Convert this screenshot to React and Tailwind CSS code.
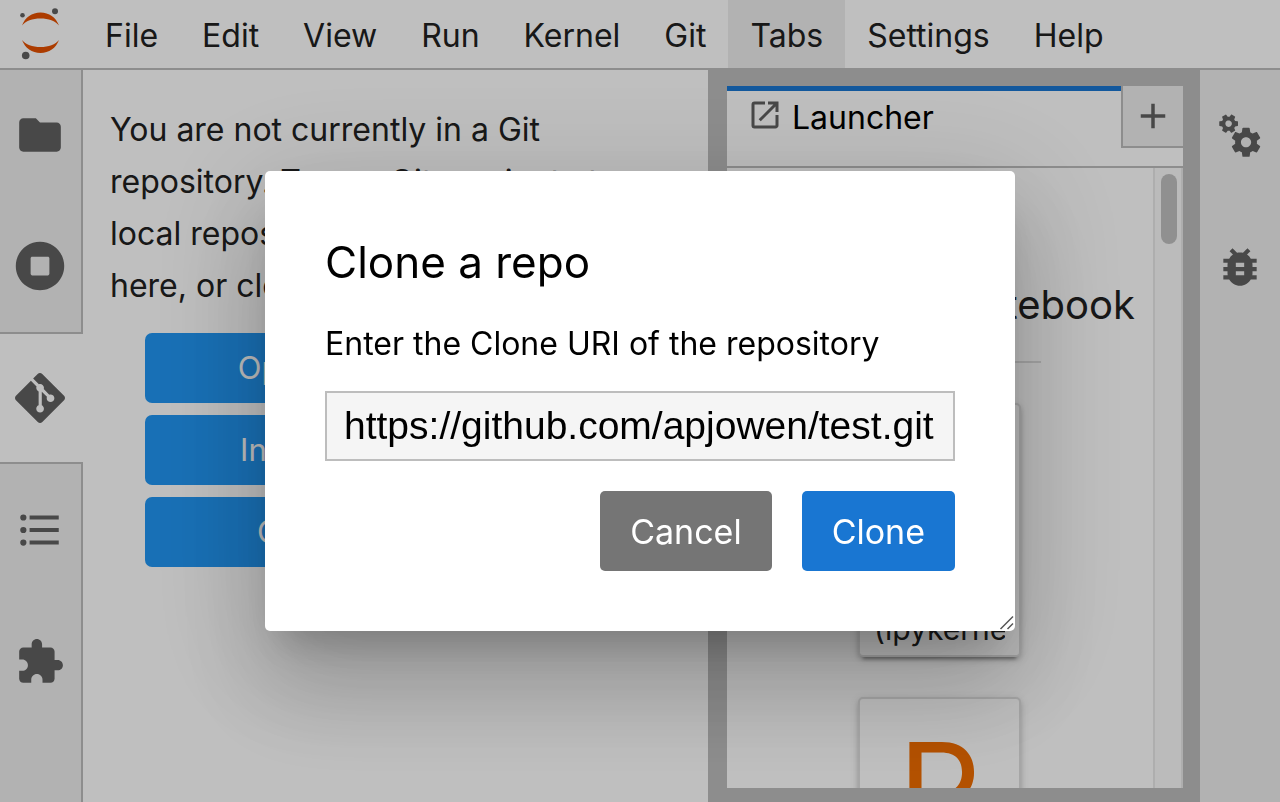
import React from "react";

const PATHS = {
  folder:
    "M10 4H4c-1.1 0-1.99.9-1.99 2L2 18c0 1.1.9 2 2 2h16c1.1 0 2-.9 2-2V8c0-1.1-.9-2-2-2h-8l-2-2z",
  git: "M23.546 10.93L13.067.452c-.604-.603-1.582-.603-2.188 0L8.708 2.627l2.76 2.76c.645-.215 1.379-.07 1.889.441.516.515.658 1.258.438 1.9l2.658 2.66c.645-.223 1.387-.078 1.9.435.721.72.721 1.884 0 2.604-.719.719-1.881.719-2.6 0-.539-.541-.674-1.337-.404-1.996L12.86 8.955v6.525c.176.086.342.203.488.348.713.721.713 1.883 0 2.6-.719.721-1.889.721-2.609 0-.719-.719-.719-1.879 0-2.598.182-.18.387-.316.605-.406V8.835c-.217-.091-.424-.222-.6-.401-.545-.545-.676-1.342-.396-2.009L7.636 3.7.45 10.881c-.6.605-.6 1.584 0 2.189l10.48 10.477c.604.604 1.582.604 2.186 0l10.43-10.43c.605-.603.605-1.582 0-2.187",
  toc: "M7 5H21V7H7V5M7 13V11H21V13H7M4 4.5A1.5 1.5 0 0 1 5.5 6A1.5 1.5 0 0 1 4 7.5A1.5 1.5 0 0 1 2.5 6A1.5 1.5 0 0 1 4 4.5M4 10.5A1.5 1.5 0 0 1 5.5 12A1.5 1.5 0 0 1 4 13.5A1.5 1.5 0 0 1 2.5 12A1.5 1.5 0 0 1 4 10.5M7 19V17H21V19H7M4 16.5A1.5 1.5 0 0 1 5.5 18A1.5 1.5 0 0 1 4 19.5A1.5 1.5 0 0 1 2.5 18A1.5 1.5 0 0 1 4 16.5Z",
  extension:
    "M20.5 11H19V7c0-1.1-.9-2-2-2h-4V3.5C13 2.12 11.88 1 10.5 1S8 2.12 8 3.5V5H4c-1.1 0-1.99.9-1.99 2v3.8H3.5c1.49 0 2.7 1.21 2.7 2.7s-1.21 2.7-2.7 2.7H2V20c0 1.1.9 2 2 2h3.8v-1.5c0-1.49 1.21-2.7 2.7-2.7 1.49 0 2.7 1.21 2.7 2.7V22H17c1.1 0 2-.9 2-2v-4h1.5c1.38 0 2.5-1.12 2.5-2.5S21.88 11 20.5 11z",
  launcher:
    "M19 19H5V5h7V3H5a2 2 0 0 0-2 2v14a2 2 0 0 0 2 2h14c1.1 0 2-.9 2-2v-7h-2v7zM14 3v2h3.59l-9.83 9.83 1.41 1.41L19 6.41V10h2V3h-7z",
  add: "M19 13h-6v6h-2v-6H5v-2h6V5h2v6h6v2z",
  bug: "M20 8h-2.81c-.45-.78-1.07-1.45-1.82-1.96L17 4.41 15.59 3l-2.17 2.17C12.96 5.06 12.49 5 12 5s-.96.06-1.41.17L8.41 3 7 4.41l1.62 1.63C7.88 6.55 7.26 7.22 6.81 8H4v2h2.09c-.05.33-.09.66-.09 1v1H4v2h2v1c0 .34.04.67.09 1H4v2h2.81c1.04 1.79 2.97 3 5.19 3s4.15-1.21 5.19-3H20v-2h-2.09c.05-.33.09-.66.09-1v-1h2v-2h-2v-1c0-.34-.04-.67-.09-1H20V8zm-6 8h-4v-2h4v2zm0-4h-4v-2h4v2z",
  gears:
    "M14.9 17.45C16.25 17.45 17.35 16.35 17.35 15C17.35 13.65 16.25 12.55 14.9 12.55C13.54 12.55 12.45 13.65 12.45 15C12.45 16.35 13.54 17.45 14.9 17.45ZM20.1 15.68L21.58 16.84C21.71 16.95 21.75 17.13 21.66 17.29L20.26 19.71C20.17 19.86 20 19.92 19.83 19.86L18.09 19.16C17.73 19.44 17.33 19.67 16.91 19.85L16.64 21.7C16.62 21.87 16.47 22 16.3 22H13.5C13.32 22 13.18 21.87 13.15 21.7L12.89 19.85C12.46 19.67 12.07 19.44 11.71 19.16L9.96 19.86C9.81 19.92 9.62 19.86 9.54 19.71L8.14 17.29C8.05 17.13 8.09 16.95 8.22 16.84L9.7 15.68L9.65 15L9.7 14.31L8.22 13.16C8.09 13.05 8.05 12.86 8.14 12.71L9.54 10.29C9.62 10.13 9.81 10.07 9.96 10.13L11.71 10.84C12.07 10.56 12.46 10.32 12.89 10.15L13.15 8.29C13.18 8.13 13.32 8 13.5 8H16.3C16.47 8 16.62 8.13 16.64 8.29L16.91 10.15C17.33 10.32 17.73 10.56 18.09 10.84L19.83 10.13C20 10.07 20.17 10.13 20.26 10.29L21.66 12.71C21.75 12.86 21.71 13.05 21.58 13.16L20.1 14.31L20.15 15L20.1 15.68ZM7.33 7.44C8.08 7.01 8.34 6.05 7.9 5.3C7.47 4.55 6.51 4.28 5.75 4.72C5.39 4.93 5.13 5.27 5.02 5.68C4.91 6.08 4.97 6.51 5.18 6.87C5.61 7.63 6.58 7.88 7.33 7.44ZM9.66 4.8L10.87 4.95C10.96 4.98 11.04 5.07 11.04 5.19L11.04 6.99C11.05 7.1 10.96 7.2 10.86 7.21L9.66 7.38L9.24 8.13L9.67 9.26C9.71 9.36 9.67 9.48 9.57 9.53L8.02 10.43C7.91 10.49 7.79 10.47 7.72 10.38L6.99 9.43L6.11 9.43L5.35 10.39C5.29 10.47 5.17 10.49 5.07 10.45L3.51 9.53C3.41 9.48 3.38 9.36 3.41 9.26L3.86 8.14L3.62 7.77L3.42 7.38L2.23 7.21C2.13 7.19 2.04 7.1 2.04 6.99L2.04 5.19C2.04 5.07 2.12 4.99 2.23 4.96L3.42 4.8L3.84 4.04L3.41 2.92C3.37 2.81 3.41 2.69 3.51 2.64L5.06 1.74C5.16 1.68 5.28 1.71 5.36 1.79L6.09 2.74L6.97 2.74L7.73 1.79C7.79 1.71 7.91 1.69 8.01 1.73L9.57 2.64C9.67 2.7 9.71 2.82 9.67 2.92L9.22 4.03L9.46 4.4L9.66 4.8Z",
};

const RUNNING =
  "M256 8C119 8 8 119 8 256s111 248 248 248 248-111 248-248S393 8 256 8zm96 328c0 8.8-7.2 16-16 16H176c-8.8 0-16-7.2-16-16V176c0-8.8 7.2-16 16-16h160c8.8 0 16 7.2 16 16v160z";

function Icon({ d, viewBox = "0 0 24 24", className = "size-[50px]" }) {
  return (
    <svg viewBox={viewBox} className={className + " shrink-0 fill-[#616161]"} aria-hidden="true">
      <path d={d} fillRule="evenodd" />
    </svg>
  );
}

function JupyterLogo() {
  return (
    <svg viewBox="0 0 83 68" className="h-[68px] w-[83px] shrink-0" role="img" aria-label="Jupyter">
      <g fill="#e65100">
        <path d="M22 25.500C25 17.500 32 12.500 40.500 12.500S56 17.500 59 25.500C55.500 21 48.500 18.500 40.500 18.500S25.500 21 22 25.500Z" />
        <path d="M22 40C25 48 32 53 40.500 53S56 48 59 40C55.500 44.500 48.500 47 40.500 47S25.500 44.500 22 40Z" />
      </g>
      <g fill="#616161">
        <circle cx="22.500" cy="15.300" r="2.300" />
        <circle cx="55" cy="11.300" r="3" />
        <circle cx="25.700" cy="55.500" r="3.800" />
      </g>
    </svg>
  );
}

const MENUS = ["File", "Edit", "View", "Run", "Kernel", "Git", "Tabs", "Settings", "Help"];

function MenuBar() {
  return (
    <header className="flex h-[70px] shrink-0 items-stretch border-b-2 border-[#bdbdbd] bg-white">
      <JupyterLogo />
      <nav className="flex items-stretch" aria-label="Main menu">
        {MENUS.map((name) => (
          <button
            key={name}
            type="button"
            className={
              "px-[22px] pt-[3px] text-[32px] " + (name === "Tabs" ? "bg-[#eeeeee]" : "bg-transparent")
            }
          >
            {name}
          </button>
        ))}
      </nav>
    </header>
  );
}

function SideTab({ label, first, active, children }) {
  return (
    <button
      type="button"
      aria-label={label}
      className={
        "flex w-full shrink-0 items-center pl-[15px] " +
        (first ? "h-[130px] " : "h-[132px] ") +
        (active ? "border-y-2 border-[#bdbdbd] bg-white" : "border-r-2 border-[#bdbdbd] bg-[#eeeeee]")
      }
    >
      {children}
    </button>
  );
}

function LeftBar() {
  return (
    <nav className="flex w-[83px] shrink-0 flex-col" aria-label="Left sidebar">
      <SideTab label="File Browser" first>
        <Icon d={PATHS.folder} />
      </SideTab>
      <SideTab label="Running Terminals and Kernels">
        <Icon d={RUNNING} viewBox="0 0 512 512" />
      </SideTab>
      <SideTab label="Git" active>
        <Icon d={PATHS.git} />
      </SideTab>
      <SideTab label="Table of Contents">
        <Icon d={PATHS.toc} />
      </SideTab>
      <SideTab label="Extension Manager">
        <Icon d={PATHS.extension} />
      </SideTab>
      <div className="flex-1 border-r-2 border-[#bdbdbd] bg-[#eeeeee]" />
    </nav>
  );
}

function GitPanel() {
  return (
    <section className="min-w-0 flex-1 bg-white px-[27px] pt-[34px]">
      <p className="text-[32px] leading-[52px]">
        You are not currently in a Git repository. To use Git, navigate to a local repository,
        initialize a repository here, or clone an existing repository.
      </p>
      <div className="mt-[21px] flex flex-col gap-3 px-[35px]">
        {["Open the FileBrowser", "Initialize a Repository", "Clone a Repository"].map((t) => (
          <button
            key={t}
            type="button"
            className="h-[70px] rounded-[7px] bg-[#2196f3] text-[31px] whitespace-nowrap text-white"
          >
            {t}
          </button>
        ))}
      </div>
    </section>
  );
}

function Card({ children }) {
  return (
    <button
      type="button"
      className="flex h-[254px] w-[163px] shrink-0 flex-col items-center overflow-hidden rounded-[5px] border-2 border-[#dedede] bg-white px-[14px] shadow-[0_7px_3px_-5px_rgba(0,0,0,0.3),0_3px_5px_0_rgba(0,0,0,0.14),0_2px_10px_0_rgba(0,0,0,0.12)]"
    >
      {children}
    </button>
  );
}

function Launcher() {
  return (
    <main className="flex w-[492px] shrink-0 flex-col bg-[#bdbdbd] pt-4 pr-[17px] pb-[14px] pl-[19px]">
      <div className="flex h-[82px] shrink-0 items-start border-b-2 border-[#bdbdbd] bg-white">
        <div className="flex flex-1 items-start gap-[9px] border-t-[5px] border-[#1976d2] pt-[6px] pl-5 text-[32px] leading-[42px] text-black">
          <Icon d={PATHS.launcher} className="size-9" />
          Launcher
        </div>
        <button
          type="button"
          aria-label="New Launcher"
          className="flex h-[62px] w-[62px] items-center justify-center border-b-2 border-l-2 border-[#bdbdbd] bg-[#eeeeee]"
        >
          <Icon d={PATHS.add} className="size-[42px]" />
        </button>
      </div>
      <div className="flex min-h-0 flex-1 bg-white">
        <div className="min-w-0 flex-1 overflow-hidden">
          <div className="mx-auto w-[202px] pt-[105px]">
            <h2 className="flex h-[90px] justify-end border-b-2 border-[#dedede] text-[40px] leading-[64px] whitespace-nowrap">
              <span className="-mr-[94px]">Notebook</span>
            </h2>
            <div className="flex flex-col items-end gap-10 pt-10 pr-5">
              <Card>
                <span className="mt-auto w-full overflow-hidden pb-2 text-left text-[30px] leading-9 whitespace-nowrap">
                  Python 3<br />
                  (ipykernel)
                </span>
              </Card>
              <Card>
                <span className="pt-[11px] text-[130px] leading-[160px] text-[#ef6c00]">P</span>
              </Card>
            </div>
          </div>
        </div>
        <div className="w-[30px] shrink-0 border-x-2 border-[#e8e8e8] bg-[#fafafa] pt-[6px] pl-[6px]">
          <div className="h-[70px] w-4 rounded-full bg-[#c1c1c1]" />
        </div>
      </div>
    </main>
  );
}

function RightBar() {
  return (
    <nav className="flex w-20 shrink-0 flex-col bg-[#eeeeee]" aria-label="Right sidebar">
      <button type="button" aria-label="Property Inspector" className="flex h-[131px] items-center justify-center">
        <Icon d={PATHS.gears} />
      </button>
      <button type="button" aria-label="Debugger" className="flex h-[132px] items-center justify-center">
        <Icon d={PATHS.bug} />
      </button>
    </nav>
  );
}

function CloneDialog() {
  return (
    <div className="fixed inset-0 flex items-center justify-center bg-black/25">
      <form
        role="dialog"
        aria-labelledby="clone-title"
        className="relative flex h-[460px] w-[750px] flex-col rounded-[5px] bg-white p-[60px] text-black shadow-[0_27px_37px_-17px_rgba(0,0,0,0.2),0_60px_95px_7px_rgba(0,0,0,0.14),0_22px_115px_20px_rgba(0,0,0,0.12)]"
        onSubmit={(e) => e.preventDefault()}
      >
        <h1 id="clone-title" className="text-[44px] leading-[62px]">
          Clone a repo
        </h1>
        <label htmlFor="clone-uri" className="mt-[30px] text-[32px] leading-[42px]">
          Enter the Clone URI of the repository
        </label>
        <input
          id="clone-uri"
          type="text"
          defaultValue="https://github.com/apjowen/test.git"
          className="mt-[26px] h-[70px] w-full shrink-0 border-2 border-[#bdbdbd] bg-[#f5f5f5] px-[17px] font-['Liberation_Sans',Arial,sans-serif] text-[39px] outline-none"
        />
        <div className="mt-[30px] flex justify-end gap-[30px]">
          <button type="button" className="h-20 rounded-[5px] bg-[#757575] px-[30px] text-[34px] text-white">
            Cancel
          </button>
          <button type="submit" className="h-20 rounded-[5px] bg-[#1976d2] px-[30px] text-[34px] text-white">
            Clone
          </button>
        </div>
        <svg
          viewBox="0 0 16 16"
          className="absolute right-0 bottom-0 size-4 fill-none stroke-[#555555]"
          aria-hidden="true"
        >
          <path d="M1.500 14L14 1.500M8.500 14L14 8.500" strokeWidth="1.500" />
        </svg>
      </form>
    </div>
  );
}

export default function App() {
  return (
    <div className="flex h-screen flex-col overflow-hidden bg-white font-[Inter,'Liberation_Sans',sans-serif] text-[#212121]">
      <MenuBar />
      <div className="flex min-h-0 flex-1">
        <LeftBar />
        <GitPanel />
        <Launcher />
        <RightBar />
      </div>
      <CloneDialog />
    </div>
  );
}
